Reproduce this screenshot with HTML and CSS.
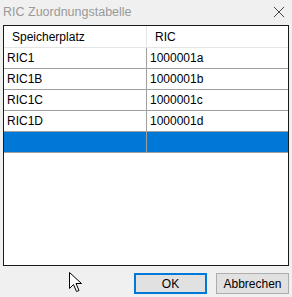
FILE: index.html
```html
<!DOCTYPE html>
<html lang="de">
<head>
  <meta charset="UTF-8">
  <title>RIC Zuordnungstabelle</title>
  <link rel="stylesheet" href="styles.css">
</head>
<body>

  <div class="titlebar">
    <span class="title">RIC Zuordnungstabelle</span>
    <svg class="close" width="12" height="12" viewBox="0 0 12 12">
      <path d="M1 1 L11 11 M11 1 L1 11" stroke="#444" stroke-width="1" fill="none"/>
    </svg>
  </div>

  <div class="grid">
    <table>
      <tr class="head"><th class="col1">Speicherplatz</th><th>RIC</th></tr>
      <tr><td class="col1">RIC1</td><td>1000001a</td></tr>
      <tr><td class="col1">RIC1B</td><td>1000001b</td></tr>
      <tr><td class="col1">RIC1C</td><td>1000001c</td></tr>
      <tr><td class="col1">RIC1D</td><td>1000001d</td></tr>
      <tr class="selected"><td class="col1"></td><td></td></tr>
    </table>
  </div>

  <div class="buttons">
    <button class="btn default">OK</button>
    <button class="btn">Abbrechen</button>
  </div>

  <!-- mauszeiger -->
  <svg class="cursor" width="13" height="20" viewBox="0 0 13 20">
    <path d="M0.5 0.5 L0.5 16.5 L4.5 12.5 L7.5 19.5 L10 18.5 L7 11.5 L12.5 11.5 Z" fill="#fff" stroke="#000" stroke-width="1"/>
  </svg>

</body>
</html>
```
FILE: styles.css
```css
body {
  margin: 0;
  background: #f0f0f0;
  font-family: "Liberation Sans", Arial, sans-serif;
  font-size: 12px;
  color: #000;
  width: 292px;
  height: 297px;
  position: relative;
  overflow: hidden;
}
.titlebar {
  height: 25px;
  display: flex;
  align-items: center;
  justify-content: space-between;
  padding: 0 7px 1px 3px;
  box-sizing: border-box;
}
.title {
  color: #999;
  font-size: 12.5px;
}
.grid {
  margin: 0 3px;
  height: 241px;
  box-sizing: border-box;
  border: 1px solid #1a1a1a;
  background: #fff;
}
table {
  width: 100%;
  border-collapse: collapse;
  table-layout: fixed;
}
th, td {
  height: 20px;
  padding: 0 0 0 3px;
  text-align: left;
  font-weight: normal;
  border-bottom: 1px solid #a0a0a0;
  border-left: 1px solid #a0a0a0;
  white-space: nowrap;
}
th {
  height: 21px;
  padding-left: 8px;
  border-bottom: 1px solid #e5e5e5;
  border-left: 1px solid #e5e5e5;
}
td.col1 {
  width: 139px;
  border-left: none;
}
th.col1 {
  width: 134px;
  border-left: none;
}
.selected td {
  background: #0078d7;
}
.buttons {
  display: flex;
  justify-content: flex-end;
  gap: 9px;
  padding: 7px 3px 0 0;
}
.btn {
  width: 73px;
  height: 21px;
  box-sizing: border-box;
  background: #e1e1e1;
  border: 1px solid #adadad;
  font-family: "Liberation Sans", Arial, sans-serif;
  font-size: 12px;
  color: #000;
  padding: 0;
}
.btn.default {
  border: 2px solid #0078d7;
}
.cursor {
  position: absolute;
  left: 69px;
  top: 272px;
}
```
